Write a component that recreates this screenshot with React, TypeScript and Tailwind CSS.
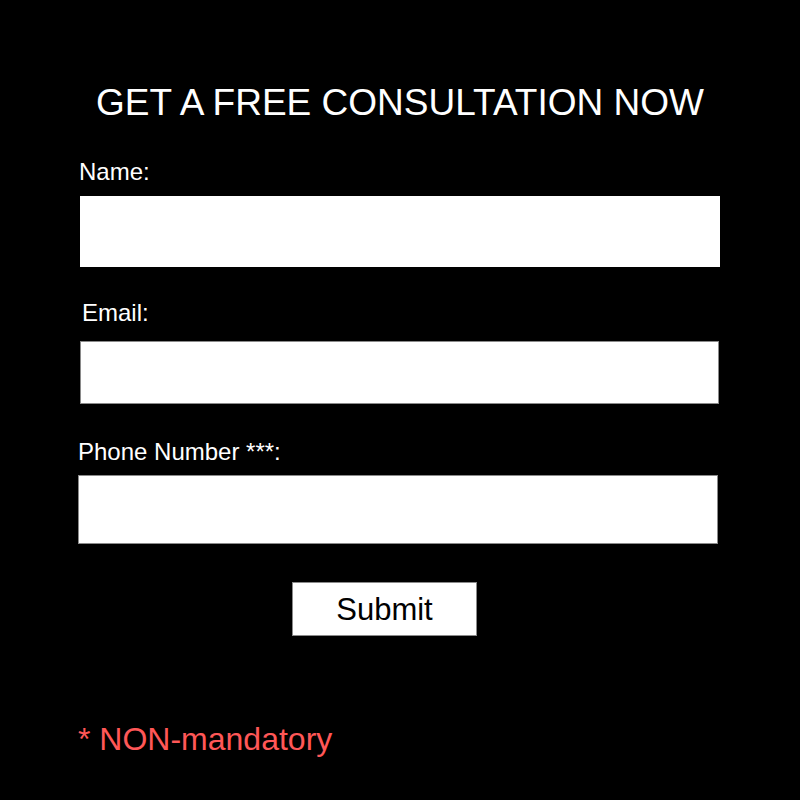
import { useState } from "react";

// Free consultation request form, white fields on black
export default function App() {
  const [name, setName] = useState("");
  const [email, setEmail] = useState("");
  const [phone, setPhone] = useState("");

  const font = { fontFamily: '"Liberation Sans", Arial, sans-serif' };

  return (
    <div className="w-[800px] h-[800px] bg-black flex flex-col" style={font}>
      <h1 className="mt-[84px] text-center text-white text-[37px] leading-[37px] font-normal">
        GET A FREE CONSULTATION NOW
      </h1>

      <form className="flex flex-col" onSubmit={(e) => e.preventDefault()}>
        <label htmlFor="name" className="mt-[39px] ml-[79px] text-white text-[24px] leading-[24px]">
          Name:
        </label>
        <input
          id="name"
          value={name}
          onChange={(e) => setName(e.target.value)}
          className="mt-[12px] ml-[80px] w-[640px] h-[71px] bg-white outline-none px-3 text-black"
        />

        <label htmlFor="email" className="mt-[34px] ml-[82px] text-white text-[24px] leading-[24px]">
          Email:
        </label>
        <input
          id="email"
          type="email"
          value={email}
          onChange={(e) => setEmail(e.target.value)}
          className="mt-[16px] ml-[80px] w-[639px] h-[63px] bg-white border border-[#8a8a8a] outline-none px-3 text-black"
        />

        <label htmlFor="phone" className="mt-[36px] ml-[78px] text-white text-[24px] leading-[24px]">
          Phone Number ***:
        </label>
        <input
          id="phone"
          type="tel"
          value={phone}
          onChange={(e) => setPhone(e.target.value)}
          className="mt-[11px] ml-[78px] w-[640px] h-[69px] bg-white border border-[#8a8a8a] outline-none px-3 text-black"
        />

        <button
          type="submit"
          className="mt-[38px] ml-[292px] w-[185px] h-[54px] bg-white border border-[#8a8a8a] text-black text-[31px] leading-[31px]"
        >
          Submit
        </button>
      </form>

      <p className="mt-[87px] ml-[78px] text-[#ff5757] text-[32px] leading-[32px]">* NON-mandatory</p>
    </div>
  );
}
